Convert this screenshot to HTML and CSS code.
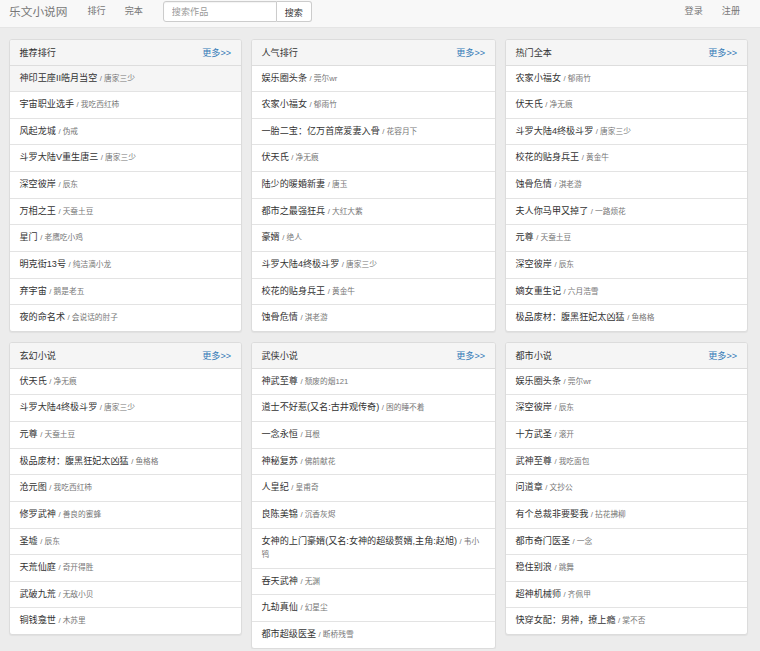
FILE: index.html
```html
<!DOCTYPE html>
<html lang="zh-CN">
<head>
<meta charset="utf-8">
<title>乐文小说网</title>
<link rel="stylesheet" href="styles.css">
</head>
<body>
<nav class="navbar">
  <a class="brand" href="#">乐文小说网</a>
  <a class="nav-link" href="#">排行</a>
  <a class="nav-link" href="#">完本</a>
  <form class="search">
    <input class="search-input" type="text" placeholder="搜索作品">
    <button class="search-btn" type="button">搜索</button>
  </form>
  <div class="nav-right">
    <a class="nav-link" href="#">登录</a>
    <a class="nav-link" href="#">注册</a>
  </div>
</nav>
<main class="grid">
  <section class="panel">
    <div class="panel-head"><span>推荐排行</span><a class="more" href="#">更多&gt;&gt;</a></div>
    <ul class="list">
      <li class="item active">神印王座II皓月当空 <small>/ 唐家三少</small></li>
      <li class="item">宇宙职业选手 <small>/ 我吃西红柿</small></li>
      <li class="item">风起龙城 <small>/ 伪戒</small></li>
      <li class="item">斗罗大陆V重生唐三 <small>/ 唐家三少</small></li>
      <li class="item">深空彼岸 <small>/ 辰东</small></li>
      <li class="item">万相之王 <small>/ 天蚕土豆</small></li>
      <li class="item">星门 <small>/ 老鹰吃小鸡</small></li>
      <li class="item">明克街13号 <small>/ 纯洁滴小龙</small></li>
      <li class="item">弃宇宙 <small>/ 鹅是老五</small></li>
      <li class="item">夜的命名术 <small>/ 会说话的肘子</small></li>
    </ul>
  </section>
  <section class="panel">
    <div class="panel-head"><span>人气排行</span><a class="more" href="#">更多&gt;&gt;</a></div>
    <ul class="list">
      <li class="item">娱乐圈头条 <small>/ 莞尔wr</small></li>
      <li class="item">农家小福女 <small>/ 郁雨竹</small></li>
      <li class="item">一胎二宝：亿万首席爱妻入骨 <small>/ 花容月下</small></li>
      <li class="item">伏天氏 <small>/ 净无痕</small></li>
      <li class="item">陆少的暖婚新妻 <small>/ 唐玉</small></li>
      <li class="item">都市之最强狂兵 <small>/ 大红大紫</small></li>
      <li class="item">豪婿 <small>/ 绝人</small></li>
      <li class="item">斗罗大陆4终极斗罗 <small>/ 唐家三少</small></li>
      <li class="item">校花的贴身兵王 <small>/ 黄金牛</small></li>
      <li class="item">蚀骨危情 <small>/ 淇老游</small></li>
    </ul>
  </section>
  <section class="panel">
    <div class="panel-head"><span>热门全本</span><a class="more" href="#">更多&gt;&gt;</a></div>
    <ul class="list">
      <li class="item">农家小福女 <small>/ 郁雨竹</small></li>
      <li class="item">伏天氏 <small>/ 净无痕</small></li>
      <li class="item">斗罗大陆4终极斗罗 <small>/ 唐家三少</small></li>
      <li class="item">校花的贴身兵王 <small>/ 黄金牛</small></li>
      <li class="item">蚀骨危情 <small>/ 淇老游</small></li>
      <li class="item">夫人你马甲又掉了 <small>/ 一路烦花</small></li>
      <li class="item">元尊 <small>/ 天蚕土豆</small></li>
      <li class="item">深空彼岸 <small>/ 辰东</small></li>
      <li class="item">嫡女重生记 <small>/ 六月浩雪</small></li>
      <li class="item">极品废材：腹黑狂妃太凶猛 <small>/ 鱼格格</small></li>
    </ul>
  </section>
  <section class="panel">
    <div class="panel-head"><span>玄幻小说</span><a class="more" href="#">更多&gt;&gt;</a></div>
    <ul class="list">
      <li class="item">伏天氏 <small>/ 净无痕</small></li>
      <li class="item">斗罗大陆4终极斗罗 <small>/ 唐家三少</small></li>
      <li class="item">元尊 <small>/ 天蚕土豆</small></li>
      <li class="item">极品废材：腹黑狂妃太凶猛 <small>/ 鱼格格</small></li>
      <li class="item">沧元图 <small>/ 我吃西红柿</small></li>
      <li class="item">修罗武神 <small>/ 善良的蜜蜂</small></li>
      <li class="item">圣墟 <small>/ 辰东</small></li>
      <li class="item">天荒仙庭 <small>/ 奇开得胜</small></li>
      <li class="item">武破九荒 <small>/ 无敌小贝</small></li>
      <li class="item">铜钱龛世 <small>/ 木苏里</small></li>
    </ul>
  </section>
  <section class="panel">
    <div class="panel-head"><span>武侠小说</span><a class="more" href="#">更多&gt;&gt;</a></div>
    <ul class="list">
      <li class="item">神武至尊 <small>/ 颓废的烟121</small></li>
      <li class="item">道士不好惹(又名:古井观传奇) <small>/ 困的睡不着</small></li>
      <li class="item">一念永恒 <small>/ 耳根</small></li>
      <li class="item">神秘复苏 <small>/ 佛前献花</small></li>
      <li class="item">人皇纪 <small>/ 皇甫奇</small></li>
      <li class="item">良陈美锦 <small>/ 沉香灰烬</small></li>
      <li class="item">女神的上门豪婿(又名:女神的超级赘婿,主角:赵旭) <small>/ 韦小鸨</small></li>
      <li class="item">吞天武神 <small>/ 无渊</small></li>
      <li class="item">九劫真仙 <small>/ 幻星尘</small></li>
      <li class="item">都市超级医圣 <small>/ 断桥残雪</small></li>
    </ul>
  </section>
  <section class="panel">
    <div class="panel-head"><span>都市小说</span><a class="more" href="#">更多&gt;&gt;</a></div>
    <ul class="list">
      <li class="item">娱乐圈头条 <small>/ 莞尔wr</small></li>
      <li class="item">深空彼岸 <small>/ 辰东</small></li>
      <li class="item">十方武圣 <small>/ 滚开</small></li>
      <li class="item">武神至尊 <small>/ 我吃面包</small></li>
      <li class="item">问道章 <small>/ 文抄公</small></li>
      <li class="item">有个总裁非要娶我 <small>/ 拈花拂柳</small></li>
      <li class="item">都市奇门医圣 <small>/ 一念</small></li>
      <li class="item">稳住别浪 <small>/ 跳舞</small></li>
      <li class="item">超神机械师 <small>/ 齐佩甲</small></li>
      <li class="item">快穿女配：男神，撩上瘾 <small>/ 棠不否</small></li>
    </ul>
  </section>
</main>
</body>
</html>
```
FILE: styles.css
```css
* { box-sizing: border-box; }
html, body { margin: 0; padding: 0; }
body {
  background: #ececec;
  font-family: "Liberation Sans", "Noto Sans CJK SC", sans-serif;
  color: #333;
  font-size: 9.1px;
}
a { text-decoration: none; }

.navbar {
  display: flex;
  align-items: flex-start;
  height: 28px;
  background: #f8f8f8;
  border-bottom: 1px solid #e5e5e5;
  padding: 1px 0 0 9px;
}
.brand {
  color: #777;
  font-size: 11.7px;
  line-height: 21px;
  margin-right: 20px;
}
.nav-link {
  color: #777;
  font-size: 9.1px;
  line-height: 21px;
  margin-right: 19px;
}
.search {
  display: flex;
  margin-left: 1px;
  height: 21px;
}
.search-input {
  width: 114px;
  height: 21px;
  border: 1px solid #ccc;
  border-radius: 3px 0 0 3px;
  padding: 0 8px;
  font-size: 9.1px;
  font-family: inherit;
  color: #555;
  background: #fff;
  outline: none;
  box-shadow: inset 0 1px 1px rgba(0,0,0,0.05);
}
.search-input::placeholder { color: #999; }
.search-btn {
  width: 35px;
  height: 21px;
  border: 1px solid #ccc;
  border-left: none;
  border-radius: 0 3px 3px 0;
  background: #fff;
  font-size: 9.1px;
  font-family: inherit;
  color: #333;
  padding: 0;
}
.nav-right {
  margin-left: auto;
  display: flex;
  margin-right: 1px;
}

.grid {
  display: grid;
  grid-template-columns: 233px 245px 243px;
  column-gap: 9px;
  row-gap: 10px;
  padding: 11px 0 0 9px;
  align-items: start;
}
.panel {
  background: #fff;
  border: 1px solid #dcdcdc;
  border-radius: 3px;
  box-shadow: 0 1px 1px rgba(0,0,0,0.05);
  overflow: hidden;
}
.panel-head {
  display: flex;
  justify-content: space-between;
  align-items: center;
  height: 25.5px;
  padding: 0 10px 0 9.5px;
  background: #f5f5f5;
  border-bottom: 1px solid #dddddd;
  font-size: 9.1px;
  color: #333;
}
.more { color: #337ab7; font-size: 9.1px; }
.list { list-style: none; margin: 0; padding: 0; }
.item {
  padding: 6px 9.5px;
  line-height: 13.65px;
  font-size: 9.1px;
  color: #333;
  border-top: 1px solid #e3e3e3;
}
.item:first-child { border-top: none; }
.item.active { background: #f5f5f5; }
.item small {
  font-size: 7.7px;
  color: #777;
}
```
